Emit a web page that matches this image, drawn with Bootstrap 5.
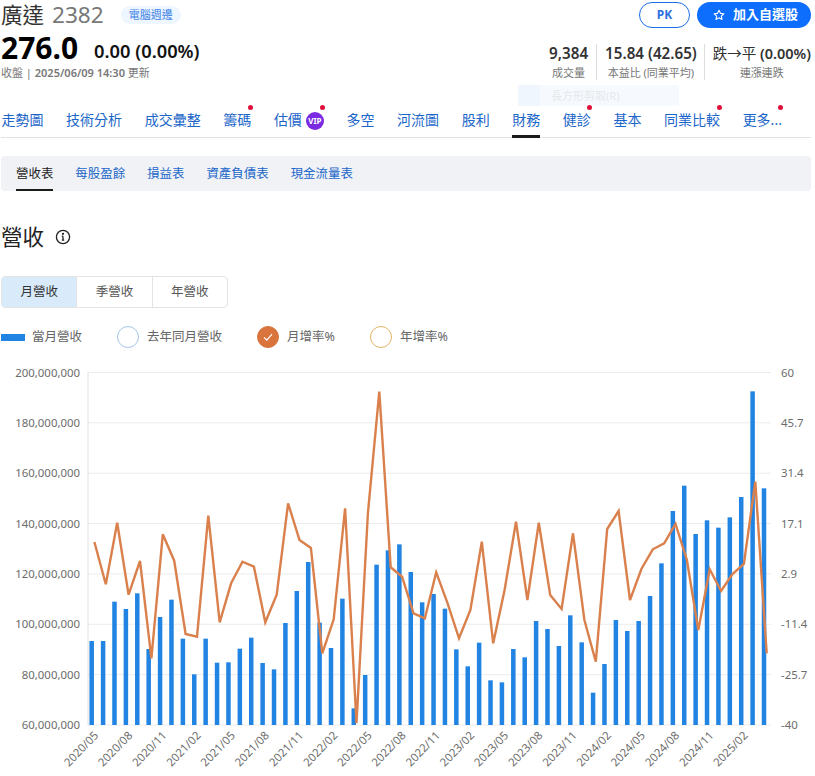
<!doctype html>
<html lang="zh-Hant">
<head>
<meta charset="utf-8">
<title>廣達 2382</title>
<link href="https://cdn.jsdelivr.net/npm/bootstrap@5.3.0/dist/css/bootstrap.min.css" rel="stylesheet">
<style>
html,body{background:#fff;overflow:hidden}
body{font-family:"Noto Sans","Noto Sans CJK TC",sans-serif;color:#212529;width:815px;height:776px;position:relative}
.page-wrap{padding:0 4px 0 1px}
.head-row{height:29px}
.stock-name{font-size:21.5px;line-height:25px;color:#333;font-weight:400}
.stock-code{font-size:22.6px;line-height:25px;color:#777;margin-left:8px}
.sector-tag{margin-left:17px;font-size:11px;line-height:18px;height:18px;padding:0 8px;border-radius:9px;background:#eef6ff;color:#3b82e6}
.pill-pk,.pill-add{height:26px;border-radius:13px;font-size:13px;font-weight:700;padding:0;display:flex;align-items:center;justify-content:center}
.pill-pk{width:51px;border:1px solid #1a6fe8;color:#2f6fe0;background:#fff;font-size:12px}
.pill-add{width:114px;background:#0d6efd;color:#fff;border:0;gap:8px;margin-left:7px;padding-left:3px}
.price-line{height:36px}
.price-main{font-size:30px;line-height:34px;padding-top:2px;font-weight:700;color:#000}
.price-chg{font-size:18.3px;line-height:36px;height:36px;font-weight:600;color:#111;margin-left:16px;padding-top:4px}
.price-note{font-size:11px;line-height:15px;color:#777}
.price-note b{font-weight:600}
.stat-row{padding-top:15px}
.stat-cell{padding:0 8px;text-align:center;border-left:1px solid #ddd;height:36px}
.stat-cell:first-child{border-left:0}
.stat-cell:nth-child(2){padding:0 7px 0 8px}
.stat-cell:last-child{padding-right:0;padding-left:8px}
.stat-cell:last-child .stat-val{font-size:14.5px}
.stat-val{font-size:15.2px;line-height:18px;font-weight:600;color:#333;white-space:nowrap}
.stat-lbl{font-size:11px;line-height:18px;color:#777;padding-top:2px}
.tab-main{margin-top:24px;border-bottom:1px solid #e2e2e2;height:34px;gap:22.6px;padding-left:.5px}
.tab-main a{position:relative;z-index:2;display:block;color:#1a66c9;font-size:14px;line-height:20px;height:34px;padding-top:6px;text-decoration:none;white-space:nowrap}
.tab-main a.is-on{border-bottom:3px solid #1a1a1a}
.red-dot{position:absolute;width:5px;height:5px;border-radius:50%;background:#e0103a;right:-1.5px;top:.5px}
.vip-mark{display:inline-block;width:18px;height:18px;border-radius:50%;background:#7a2be2;color:#fff;font-size:8px;line-height:18px;font-weight:700;text-align:center;vertical-align:1px;margin-left:4px}
.sub-bar{margin-top:18px;height:35px;background:#f0f2f5;border-radius:4px;padding-left:15px;gap:22px}
.sub-bar a{display:block;color:#1a66c9;font-size:12.45px;line-height:35px;height:35px;text-decoration:none}
.sub-bar a.is-on{color:#222;border-bottom:2px solid #1a1a1a}
.sect-title{margin-top:29px;height:34px;font-size:21.5px;line-height:34px;color:#222;font-weight:400;gap:11px}
.range-tabs{margin-top:22px;width:227px;height:32px;border:1px solid #e3e3e3;border-radius:4px;overflow:hidden;font-size:12.5px;color:#555}
.range-tabs div{flex:1;text-align:center;line-height:30px;border-left:1px solid #e3e3e3}
.range-tabs div:first-child{border-left:0;background:#d9ebfb;color:#333}
.legend-line{margin-top:17px;height:24px;font-size:12.5px;color:#666}
.legend-line .key-text{margin-right:35px}
.bar-key{width:24px;height:7px;background:#2184e3;margin-right:7px}
.ring-key{width:22px;height:22px;border-radius:50%;border:1px solid;margin-right:8px;display:flex;align-items:center;justify-content:center}
.ring-blue{border-color:#a5c6e6}
.ring-orange{background:#d9743c;border-color:#d9743c}
.ring-yellow{border-color:#e6b566}
.chart-box{display:block;margin-top:11px}
.chart-box text{font-family:"Noto Sans",sans-serif;font-size:11.4px;fill:#6c6c6c}
.ghost-tip{position:absolute;left:518px;top:85px;width:161px;height:21px;background:#f6faff;color:#e6e8ea;font-size:11px;line-height:21px;padding-left:33px}
.ghost-tip i{position:absolute;left:0;top:0;width:22px;height:21px;background:#f0f6fe}
</style>
</head>
<body>
<div class="page-wrap">
  <div class="d-flex head-row align-items-center">
    <span class="stock-name">廣達</span><span class="stock-code">2382</span><span class="sector-tag">電腦週邊</span>
    <div class="ms-auto d-flex">
      <button class="btn pill-pk">PK</button>
      <button class="btn pill-add"><svg width="12" height="12" viewBox="0 0 24 24" fill="none" stroke="#fff" stroke-width="2.2" stroke-linejoin="round"><path d="M12 2.5l2.9 6.2 6.8.8-5 4.6 1.3 6.7-6-3.4-6 3.4 1.3-6.7-5-4.6 6.8-.8z"/></svg><span>加入自選股</span></button>
    </div>
  </div>
  <div class="d-flex">
    <div>
      <div class="d-flex price-line"><span class="price-main">276.0</span><span class="price-chg">0.00 (0.00%)</span></div>
      <div class="price-note">收盤 | <b>2025/06/09 14:30</b> 更新</div>
    </div>
    <div class="ms-auto d-flex stat-row">
      <div class="stat-cell"><div class="stat-val">9,384</div><div class="stat-lbl">成交量</div></div>
      <div class="stat-cell"><div class="stat-val">15.84 (42.65)</div><div class="stat-lbl">本益比 (同業平均)</div></div>
      <div class="stat-cell"><div class="stat-val"><span class="fw-normal">跌→平</span> (0.00%)</div><div class="stat-lbl">連漲連跌</div></div>
    </div>
  </div>
  <nav class="d-flex tab-main">
    <a href="#">走勢圖</a><a href="#">技術分析</a><a href="#">成交彙整</a>
    <a href="#">籌碼<i class="red-dot"></i></a>
    <a href="#">估價<span class="vip-mark">VIP</span><i class="red-dot"></i></a>
    <a href="#">多空</a><a href="#">河流圖</a><a href="#">股利</a>
    <a href="#" class="is-on">財務</a>
    <a href="#">健診<i class="red-dot"></i></a>
    <a href="#">基本</a>
    <a href="#">同業比較<i class="red-dot"></i></a>
    <a href="#">更多...<i class="red-dot"></i></a>
  </nav>
  <div class="d-flex sub-bar">
    <a href="#" class="is-on">營收表</a><a href="#">每股盈餘</a><a href="#">損益表</a><a href="#">資產負債表</a><a href="#">現金流量表</a>
  </div>
  <div class="sect-title d-flex align-items-center">營收
    <svg width="16" height="16" viewBox="0 0 16 16" fill="none" stroke="#222" stroke-width="1.3"><circle cx="8" cy="8" r="6.6"/><path d="M8 7.2v4M6.8 7.2H8M6.8 11.2h2.4"/><circle cx="8" cy="4.8" r=".5" fill="#222"/></svg>
  </div>
  <div class="d-flex range-tabs"><div>月營收</div><div>季營收</div><div>年營收</div></div>
  <div class="d-flex align-items-center legend-line">
    <span class="bar-key"></span><span class="key-text">當月營收</span>
    <span class="ring-key ring-blue"></span><span class="key-text">去年同月營收</span>
    <span class="ring-key ring-orange"><svg width="12" height="12" viewBox="0 0 12 12" fill="none" stroke="#fff" stroke-width="1.2"><path d="M2 6.3l2.8 2.8L10 3.2"/></svg></span><span class="key-text">月增率%</span>
    <span class="ring-key ring-yellow"></span><span>年增率%</span>
  </div>
</div>
<svg class="chart-box" id="chart" width="815" height="416" viewBox="0 360 815 416" xmlns="http://www.w3.org/2000/svg"></svg>
<div class="ghost-tip"><i></i>長方形剪取(R)</div>
<script>
var barTop=[813,813,695,717,670,837,741,689,806,913,806,878,877,836,803,879,898,759,663,576,758,834,686,1015,915,584,541,523,606,697,672,716,838,889,818,931,937,837,862,753,777,828,736,817,968,882,750,783,753,678,580,423,347,492,451,473,442,381,64,355];
var lineY=[516,643,458,674,573,865,493,572,792,800,437,757,640,575,590,757,674,400,510,534,850,748,415,1060,430,65,592,620,730,745,607,700,805,720,515,820,660,455,690,458,675,717,490,750,875,477,423,690,597,538,520,462,570,780,598,663,612,582,335,850];
var yL=['200,000,000','180,000,000','160,000,000','140,000,000','120,000,000','100,000,000','80,000,000','60,000,000'];
var yR=['60','45.7','31.4','17.1','2.9','-11.4','-25.7','-40'];
var xL=['2020/05','2020/08','2020/11','2021/02','2021/05','2021/08','2021/11','2022/02','2022/05','2022/08','2022/11','2023/02','2023/05','2023/08','2023/11','2024/02','2024/05','2024/08','2024/11','2025/02'];
var top0=372.5,bot=725,left=88,right=771,step=(bot-top0)/7,o='';
for(var i=0;i<8;i++){var y=top0+step*i;
 o+='<line x1="'+left+'" x2="'+right+'" y1="'+y+'" y2="'+y+'" stroke="#ececec"/>';
 o+='<text x="80" y="'+(y+4.2)+'" text-anchor="end">'+yL[i]+'</text>';
 o+='<text x="781" y="'+(y+4.2)+'">'+yR[i]+'</text>';}
o+='<line x1="'+left+'" x2="'+left+'" y1="'+top0+'" y2="'+bot+'" stroke="#e0e0e0"/>';
var pts=[];
barTop.forEach(function(t,k){var x=91.7+k*11.395,y=370+t/3;
 o+='<rect x="'+(x-2.25)+'" y="'+y+'" width="4.5" height="'+(bot-y)+'" fill="#2184e3"/>';
 pts.push((x+2.7).toFixed(1)+','+(370+lineY[k]/3).toFixed(1));});
o+='<polyline points="'+pts.join(' ')+'" fill="none" stroke="#d9804d" stroke-width="2.4" stroke-linejoin="miter"/>';
xL.forEach(function(t,k){var x=99+k*34.18;
 o+='<text transform="translate('+x+' 736) rotate(-46)" text-anchor="end">'+t+'</text>';});
document.getElementById('chart').innerHTML=o;
</script>
<script src="https://cdn.jsdelivr.net/npm/bootstrap@5.3.0/dist/js/bootstrap.bundle.min.js"></script>
</body>
</html>
